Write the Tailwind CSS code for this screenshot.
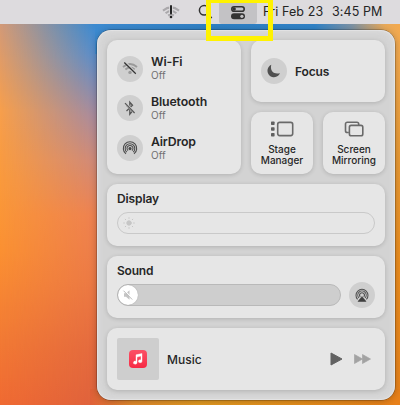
<!DOCTYPE html>
<html lang="en">
<head>
<meta charset="utf-8">
<title>Control Center</title>
<script src="https://cdn.jsdelivr.net/npm/@tailwindcss/browser@4"></script>
</head>
<body class="w-[400px] h-[405px] overflow-hidden font-[Inter,sans-serif] text-[#262626]">
<main class="relative w-[400px] h-[405px] overflow-hidden flex flex-col bg-[linear-gradient(90deg,#f09a35_0%,#e46238_100%)]">
  <!-- wallpaper -->
  <div class="absolute inset-0 bg-[linear-gradient(180deg,#d39a78_24px,#f79f4c_110px,#fa9a3c_180px,#fb9132_250px,#f27a34_340px,#f06a32_405px)]"></div>
  <div class="absolute inset-y-0 left-0 w-[130px] bg-[linear-gradient(180deg,#3c8ad0_24px,#5c8dc8_55px,#a98b9c_115px,#d08a78_160px,#ee8250_215px,#ec7a45_280px,#e46a3e_350px,#df623c_405px)] [mask-image:linear-gradient(90deg,transparent_0%,black_72%)]"></div>
  <div class="absolute top-[24px] left-[95px] w-[305px] h-[30px] bg-[linear-gradient(90deg,#3c8ad0_0%,#2f80c4_40%,#3183c8_72%,#7b92a6_84%,#e8a95a_95%,#f3a94e_100%)]"></div>
  <div class="absolute top-[54px] right-0 w-[20px] bottom-0 bg-[linear-gradient(180deg,#f3a94e,#e99a35_30%,#ec8d1e_60%,#e8821b)]"></div>
  <div class="absolute bottom-0 left-[90px] right-0 h-[16px] bg-[linear-gradient(90deg,#df6038_0%,#e08a2c_14%,#e29a22_35%,#e6901c_65%,#e8801a_100%)]"></div>

  <!-- menu bar -->
  <header class="relative h-[24px] shrink-0 bg-[#dddbde] flex items-center text-[#252525]">
    <svg class="ml-[162px] w-[18px] h-[16px] shrink-0" viewBox="0 0 18 16" fill="none">
      <g stroke="#aaa8ab" stroke-width="2"><path d="M1 6.6Q9 .2 17 6.6"/><path d="M3.6 9.2Q9 4.6 14.4 9.2"/><path d="M6.2 11.6Q9 9.4 11.8 11.6"/></g>
      <path d="M9 1.5v8.5" stroke="#dddbde" stroke-width="3.6"/>
      <path d="M9 2v7.5" stroke="#252525" stroke-width="2" stroke-linecap="round"/><circle cx="9" cy="13" r="1.3" fill="#252525"/>
    </svg>
    <svg class="ml-[18px] w-[16px] h-[16px] shrink-0" viewBox="0 0 16 16" fill="none" stroke="#333" stroke-width="1.5"><circle cx="6.2" cy="6.3" r="4.8"/><path d="M9.8 10l4 4"/></svg>
    <div class="ml-[5px] w-[38px] h-[24px] rounded-b-[3px] bg-[#c3c2c5] flex items-center justify-center shrink-0">
      <svg class="w-[16px] h-[15px]" viewBox="0 0 16 15" fill="none"><rect x="1.8" y="1.7" width="12.4" height="4.6" rx="2.3" stroke="#333" stroke-width="1.6"/><circle cx="4.2" cy="4" r="1.7" fill="#333"/><rect x="1" y="8.3" width="14" height="6" rx="3" fill="#333"/><circle cx="11.9" cy="11.3" r="1.6" fill="#c3c2c5"/></svg>
    </div>
    <div class="ml-[6px] text-[12.5px] leading-[24px] whitespace-nowrap flex"><span class="w-[69px] tracking-[0.12px]">Fri Feb 23</span><span class="tracking-[0.1px]">3:45 PM</span></div>
  </header>

  <!-- control center -->
  <section class="relative mt-[6px] ml-[97px] w-[298px] h-[370px] shrink-0 rounded-[14px] bg-[#d3d3d3] p-[10px] flex flex-col gap-[10px] shadow-[0_0_0_0.5px_rgba(0,0,0,0.35),0_1px_7px_rgba(0,0,0,0.28),inset_0_0_0_1px_rgba(255,255,255,0.25),inset_0_0_8px_rgba(235,235,238,0.6)]">
    <div class="h-[134px] flex gap-[10px]">
      <div class="w-[134px] rounded-[10px] bg-[#e6e6e6] shadow-[0_1px_4px_rgba(0,0,0,0.16)] pl-[10px] pt-[16px] flex flex-col">
        <div class="h-[39px] flex items-start">
          <div class="size-[26px] rounded-full bg-[#cfcfcf] flex items-center justify-center">
            <svg class="size-[18px]" viewBox="0 0 18 18" fill="none"><g stroke="#999" stroke-width="1.9"><path d="M2 7Q9 1.2 16 7"/><path d="M4.4 9.5Q9 5.5 13.6 9.5"/></g><circle cx="9" cy="12.4" r="1.7" fill="#999"/><path d="M4.3 2l11 11" stroke="#cfcfcf" stroke-width="1.4"/><path d="M3.3 2.5l11.5 11.2" stroke="#333" stroke-width="1.2"/></svg>
          </div>
          <div class="ml-[8px] -mt-px"><p class="text-[12.3px] leading-[14px] font-semibold tracking-[-0.1px]">Wi-Fi</p><p class="text-[10px] leading-[13px] text-[#707070]">Off</p></div>
        </div>
        <div class="h-[40px] flex items-start">
          <div class="size-[26px] rounded-full bg-[#cfcfcf] flex items-center justify-center">
            <svg class="size-[18px]" viewBox="0 0 18 18" fill="none"><path d="M5.5 12l6-5.8-2.7-3v12L11.5 12l-6-5.8" stroke="#555" stroke-width="1.3"/><path d="M4.6 4.4l9.2 9.4" stroke="#cfcfcf" stroke-width="2.4"/><path d="M4 4.2l9.6 9.8" stroke="#555" stroke-width="1.2"/></svg>
          </div>
          <div class="ml-[8px]"><p class="text-[12.3px] leading-[14px] font-semibold tracking-[-0.13px]">Bluetooth</p><p class="text-[10px] leading-[13px] text-[#707070]">Off</p></div>
        </div>
        <div class="h-[27px] flex items-start">
          <div class="size-[26px] rounded-full bg-[#cfcfcf] flex items-center justify-center">
            <svg class="size-[16px]" viewBox="0 0 16 16" fill="none" stroke="#4a4a4a" stroke-width="1.05"><path d="M4 13.8A6.7 6.7 0 1 1 12 13.8"/><path d="M4.8 12.1A4.8 4.8 0 1 1 11.2 12.1"/><path d="M6 10.7A3 3 0 1 1 10 10.7"/><circle cx="8" cy="8.6" r="1.1" fill="#4a4a4a"/></svg>
          </div>
          <div class="ml-[8px]"><p class="text-[12.3px] leading-[14px] font-semibold tracking-[-0.17px]">AirDrop</p><p class="text-[10px] leading-[13px] text-[#707070]">Off</p></div>
        </div>
      </div>
      <div class="w-[134px] flex flex-col gap-[10px]">
        <div class="h-[62px] rounded-[10px] bg-[#e6e6e6] shadow-[0_1px_4px_rgba(0,0,0,0.16)] pl-[10px] flex items-center">
          <div class="size-[26px] rounded-full bg-[#cfcfcf] flex items-center justify-center">
            <svg class="size-[14px]" viewBox="0 0 14 14"><path d="M4.3.8C2.8 6.5 6.2 11 13 9.2A6.5 6.5 0 1 1 4.3.8Z" fill="#505050"/></svg>
          </div>
          <p class="ml-[8px] mt-px text-[12px] font-semibold tracking-[-0.15px]">Focus</p>
        </div>
        <div class="h-[62px] flex gap-[10px] text-[10px] leading-[11px] font-medium text-center">
          <div class="w-[62px] rounded-[10px] bg-[#e6e6e6] shadow-[0_1px_4px_rgba(0,0,0,0.16)] pt-[8px] flex flex-col items-center">
            <svg class="w-[24px] h-[18px]" viewBox="0 0 24 18" fill="none"><g fill="#606060"><rect x="1" y="1.6" width="3.6" height="3.4" rx=".7"/><rect x="1" y="7.3" width="3.6" height="3.4" rx=".7"/><rect x="1" y="13" width="3.6" height="3.4" rx=".7"/></g><rect x="7.7" y="2.4" width="15" height="13.2" rx="2" stroke="#6a6a6a" stroke-width="1.6"/></svg>
            <p class="mt-[6px]">Stage<br>Manager</p>
          </div>
          <div class="w-[62px] rounded-[10px] bg-[#e6e6e6] shadow-[0_1px_4px_rgba(0,0,0,0.16)] pt-[8px] flex flex-col items-center">
            <svg class="w-[20px] h-[18px]" viewBox="0 0 20 18" fill="none" stroke="#6a6a6a" stroke-width="1.6"><path d="M4.8 12.5H3.3a1.8 1.8 0 0 1-1.8-1.8V4a1.8 1.8 0 0 1 1.8-1.8h9.6A1.8 1.8 0 0 1 14.7 4v1.1"/><rect x="5.4" y="5.4" width="13.4" height="10.4" rx="1.8"/></svg>
            <p class="mt-[6px]">Screen<br>Mirroring</p>
          </div>
        </div>
      </div>
    </div>

    <div class="h-[62px] rounded-[10px] bg-[#e6e6e6] shadow-[0_1px_4px_rgba(0,0,0,0.16)] px-[10px] pt-[7px]">
      <p class="text-[12px] leading-[16px] font-semibold tracking-[-0.1px]">Display</p>
      <div class="mt-[5px] h-[22px] rounded-full border border-[#c9c9c9] flex items-center pl-[5px]">
        <svg class="size-[12px]" viewBox="0 0 12 12" stroke="#c6c6c6" stroke-linecap="round"><circle cx="6" cy="6" r="2.2" fill="#c6c6c6"/><path d="M6 .7v.7M6 10.6v.7M.7 6h.7M10.6 6h.7M2.2 2.2l.5.5M9.3 9.3l.5.5M2.2 9.8l.5-.5M9.3 2.7l.5-.5"/></svg>
      </div>
    </div>

    <div class="h-[62px] rounded-[10px] bg-[#e6e6e6] shadow-[0_1px_4px_rgba(0,0,0,0.16)] px-[10px] pt-[7px]">
      <p class="text-[12px] leading-[16px] font-semibold tracking-[-0.2px]">Sound</p>
      <div class="mt-[3px] flex items-center justify-between">
        <div class="w-[224px] h-[22px] rounded-full bg-[#cecece] border border-[#b9b9b9] flex items-center">
          <div class="size-[20px] rounded-full bg-white flex items-center justify-center shadow-[0_0_1px_rgba(0,0,0,0.3)]">
            <svg class="size-[12px]" viewBox="0 0 12 12"><path d="M2 4.2h2L7.5 1.2v9.6L4 7.8H2Z" fill="#c4c4c4"/><path d="M2.3 1.2l8.6 8.9" stroke="#fff" stroke-width="1.1"/><path d="M1.5 1.7l8.7 8.8" stroke="#bbb" stroke-width="1"/></svg>
          </div>
        </div>
        <div class="size-[26px] rounded-full bg-[#cfcfcf] flex items-center justify-center">
          <svg class="size-[16px]" viewBox="0 0 16 16" fill="none" stroke="#505050" stroke-width="1.05"><path d="M3.6 12.4A6 6 0 1 1 12.4 12.4"/><path d="M4.9 11A4.2 4.2 0 1 1 11.1 11"/><path d="M6.2 9.8A2.4 2.4 0 1 1 9.8 9.8"/><path d="M8 9.6l4 4.8H4Z" fill="#404040" stroke="#404040" stroke-width=".6" stroke-linejoin="round"/></svg>
        </div>
      </div>
    </div>

    <div class="h-[62px] rounded-[10px] bg-[#e6e6e6] shadow-[0_1px_4px_rgba(0,0,0,0.16)] px-[10px] flex items-center">
      <div class="size-[42px] rounded-[2px] bg-[#cecece] flex items-center justify-center">
        <div class="size-[18px] rounded-[4px] bg-linear-to-b from-[#fb5066] to-[#f72844] flex items-center justify-center">
          <svg class="size-[14px]" viewBox="0 0 14 14"><path d="M5 2.8l6-1.3v7.8a1.8 1.5 0 1 1-1-1.4V4.1L6 5v5.7a1.8 1.5 0 1 1-1-1.4Z" fill="#fff" stroke="#fff" stroke-width=".4"/></svg>
        </div>
      </div>
      <p class="ml-[8px] mt-px text-[12px] font-medium">Music</p>
      <svg class="ml-auto mr-[11px] w-[13px] h-[14px]" viewBox="0 0 13 14"><path d="M1 1l11 6-11 6Z" fill="#626262" stroke="#626262" stroke-linejoin="round"/></svg>
      <svg class="mr-[4px] w-[17px] h-[10px]" viewBox="0 0 17 10"><path d="M.5.5L8.5 5l-8 4.5ZM8.5.5l8 4.5-8 4.5Z" fill="#a3a3a3" stroke="#a3a3a3" stroke-width=".7" stroke-linejoin="round"/></svg>
    </div>
  </section>

  <!-- highlight frame -->
  <div class="absolute left-[206px] top-[-2px] w-[67px] h-[43px] border-[5px] border-[#fff200]"></div>
</main>
</body>
</html>
